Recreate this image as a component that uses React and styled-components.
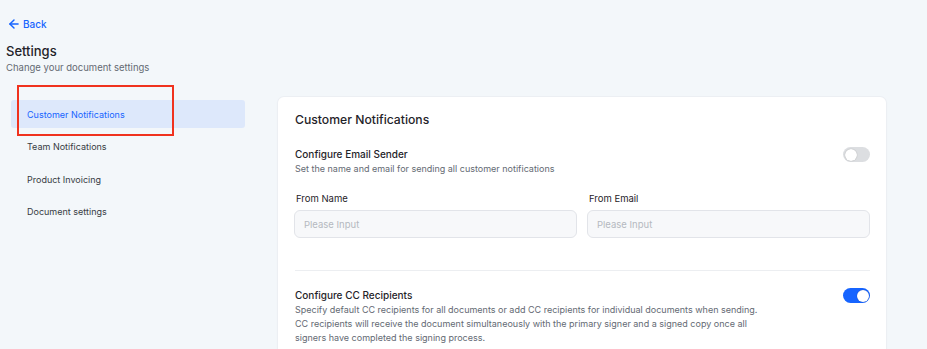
import React from "react";
import styled, { createGlobalStyle } from "styled-components";
import { ArrowLeft } from "lucide-react";

const GlobalStyle = createGlobalStyle`
  * { box-sizing: border-box; }
  body {
    margin: 0;
    background: #f3f7fa;
    font-family: Inter, "Noto Sans", sans-serif;
    color: #1f2329;
  }
`;

const Page = styled.div`
  min-height: 349px;
  padding: 15px 6px 0;
`;

const BackLink = styled.a`
  display: inline-flex;
  align-items: center;
  gap: 2px;
  margin-left: 1px;
  color: #1664ff;
  font-size: 10px;
  font-weight: 500;
  cursor: pointer;
`;

const Title = styled.h2`
  margin: 7px 0 0;
  font-size: 13px;
  font-weight: 500;
  line-height: 18px;
`;

const SubTitle = styled.p`
  margin: 0;
  font-size: 9.5px;
  color: #646a73;
  line-height: 15px;
`;

const Body = styled.div`
  display: flex;
  align-items: flex-start;
  gap: 33px;
  margin-top: 22px;
`;

const Nav = styled.nav`
  width: 234px;
  margin-left: 5px;
  margin-top: 3px;
  display: flex;
  flex-direction: column;
  gap: 4.5px;
`;

const NavItem = styled.div`
  position: relative;
  height: 28px;
  display: flex;
  align-items: center;
  padding-left: 16px;
  border-radius: 3px;
  font-size: 9px;
  color: ${p => (p.$active ? "#1664ff" : "#373c43")};
  background: ${p => (p.$active ? "#dde8fb" : "transparent")};
`;

const Highlight = styled.span`
  position: absolute;
  left: 6px;
  top: -15px;
  width: 157px;
  height: 51px;
  border: 2px solid #f0321e;
  pointer-events: none;
`;

const Card = styled.section`
  width: 608px;
  background: #fff;
  border-radius: 6px;
  box-shadow: 0 0 0 1px #eceff3, 0 1px 3px rgba(0, 0, 0, 0.04);
  padding: 15px 16px 0 17px;
  height: 260px;
`;

const CardTitle = styled.h3`
  margin: 0;
  font-size: 12.2px;
  font-weight: 500;
  line-height: 16px;
`;

const Section = styled.div`
  padding-top: ${p => p.$top}px;
`;

const SectionHead = styled.div`
  display: flex;
  justify-content: space-between;
  align-items: flex-start;
`;

const SectionTitle = styled.div`
  font-size: 10px;
  font-weight: 500;
  line-height: 15px;
`;

const SectionDesc = styled.div`
  font-size: 9px;
  color: #646a73;
  line-height: 14px;
`;

const Toggle = styled.span`
  width: 27px;
  height: 15px;
  border-radius: 8px;
  background: ${p => (p.$on ? "#1664ff" : "#dcdee1")};
  display: flex;
  align-items: center;
  justify-content: ${p => (p.$on ? "flex-end" : "flex-start")};
  padding: 0 1.5px;
  flex-shrink: 0;
`;

const Knob = styled.span`
  width: 12px;
  height: 12px;
  border-radius: 50%;
  background: #fff;
  box-shadow: 0 0 1px rgba(0, 0, 0, 0.35);
`;

const Fields = styled.div`
  display: grid;
  grid-template-columns: 1fr 1fr;
  gap: 10px;
  margin: 16px 0 0 -1px;
`;

const Field = styled.label`
  display: flex;
  flex-direction: column;
  gap: 4px;
`;

const FieldLabel = styled.span`
  font-size: 9.5px;
  padding-left: 2px;
  line-height: 14px;
`;

const Input = styled.input`
  height: 28px;
  border: 1px solid #e2e4e9;
  border-radius: 6px;
  background: #f7f8fa;
  padding: 0 9px;
  font-family: inherit;
  font-size: 9.5px;
  outline: none;
  &::placeholder {
    color: #b5b9c0;
  }
`;

const Divider = styled.hr`
  border: none;
  border-top: 1px solid #eceef1;
  margin: 32px 0 0;
`;

const navItems = [
  "Customer Notifications",
  "Team Notifications",
  "Product Invoicing",
  "Document settings",
];

export default function App() {
  return (
    <Page>
      <GlobalStyle />
      <BackLink>
        <ArrowLeft size={14} strokeWidth={2.5} />
        Back
      </BackLink>
      <Title>Settings</Title>
      <SubTitle>Change your document settings</SubTitle>
      <Body>
        <Nav>
          {navItems.map((item, i) => (
            <NavItem key={item} $active={i === 0}>
              {item}
              {i === 0 && <Highlight />}
            </NavItem>
          ))}
        </Nav>
        <Card>
          <CardTitle>Customer Notifications</CardTitle>
          <Section $top={19}>
            <SectionHead>
              <div>
                <SectionTitle>Configure Email Sender</SectionTitle>
                <SectionDesc>
                  Set the name and email for sending all customer notifications
                </SectionDesc>
              </div>
              <Toggle>
                <Knob />
              </Toggle>
            </SectionHead>
            <Fields>
              <Field>
                <FieldLabel>From Name</FieldLabel>
                <Input placeholder="Please Input" />
              </Field>
              <Field>
                <FieldLabel>From Email</FieldLabel>
                <Input placeholder="Please Input" />
              </Field>
            </Fields>
          </Section>
          <Divider />
          <Section $top={17}>
            <SectionHead>
              <div>
                <SectionTitle>Configure CC Recipients</SectionTitle>
                <SectionDesc>
                  Specify default CC recipients for all documents or add CC
                  recipients for individual documents when sending.
                  <br />
                  CC recipients will receive the document simultaneously with
                  the primary signer and a signed copy once all
                  <br />
                  signers have completed the signing process.
                </SectionDesc>
              </div>
              <Toggle $on>
                <Knob />
              </Toggle>
            </SectionHead>
          </Section>
        </Card>
      </Body>
    </Page>
  );
}
